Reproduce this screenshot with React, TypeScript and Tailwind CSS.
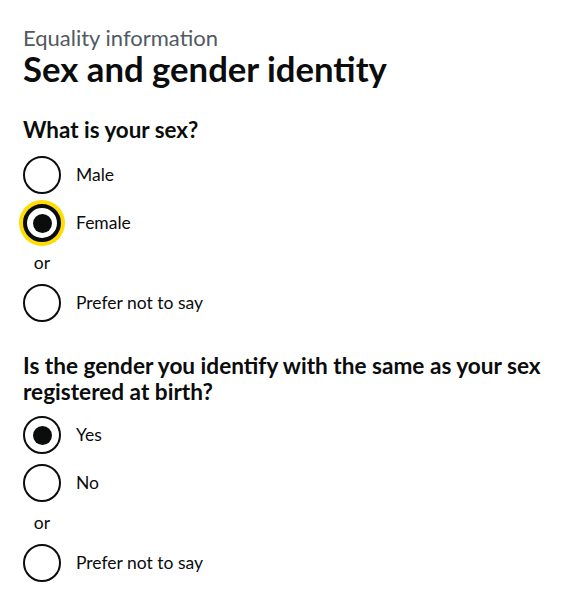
import React from "react";

function Radio({ checked = false, focused = false, label }: { checked?: boolean; focused?: boolean; label: string }) {
  return (
    <div className="flex items-center h-[38px]">
      <div
        className={
          "w-[38px] h-[38px] rounded-full bg-white flex items-center justify-center shrink-0 border-[#0b0c0c] " +
          (focused ? "border-[4px] shadow-[0_0_0_4px_#ffdd00]" : "border-2")
        }
      >
        {checked ? <div className="w-[19px] h-[19px] rounded-full bg-[#0b0c0c]" /> : null}
      </div>
      <span className="ml-[15px] text-[17.5px] leading-[24px]">{label}</span>
    </div>
  );
}

function Divider() {
  return <div className="w-[38px] text-center text-[17.5px] leading-[22px] h-[22px]">or</div>;
}

export default function App() {
  return (
    <div className="bg-white min-h-[600px] px-[23px] pt-[26px] text-[#0b0c0c]" style={{ fontFamily: "Lato, 'Liberation Sans', sans-serif" }}>
      <span className="block text-[#505a5f] text-[22px] leading-[24px]">Equality information</span>
      <h1 className="text-[34.7px] leading-[36px] font-bold mt-[1px]">Sex and gender identity</h1>

      <fieldset className="mt-[30px]">
        <legend className="text-[22.4px] leading-[26px] font-bold mb-[13px]">What is your sex?</legend>
        <div className="flex flex-col gap-[10px]">
          <Radio label="Male" />
          <Radio label="Female" checked focused />
          <Divider />
          <Radio label="Prefer not to say" />
        </div>
      </fieldset>

      <fieldset className="mt-[31px]">
        <legend className="text-[22.6px] leading-[26px] font-bold mb-[11px] max-w-[540px]">
          Is the gender you identify with the same as your sex registered at birth?
        </legend>
        <div className="flex flex-col gap-[10px]">
          <Radio label="Yes" checked />
          <Radio label="No" />
          <Divider />
          <Radio label="Prefer not to say" />
        </div>
      </fieldset>
    </div>
  );
}
